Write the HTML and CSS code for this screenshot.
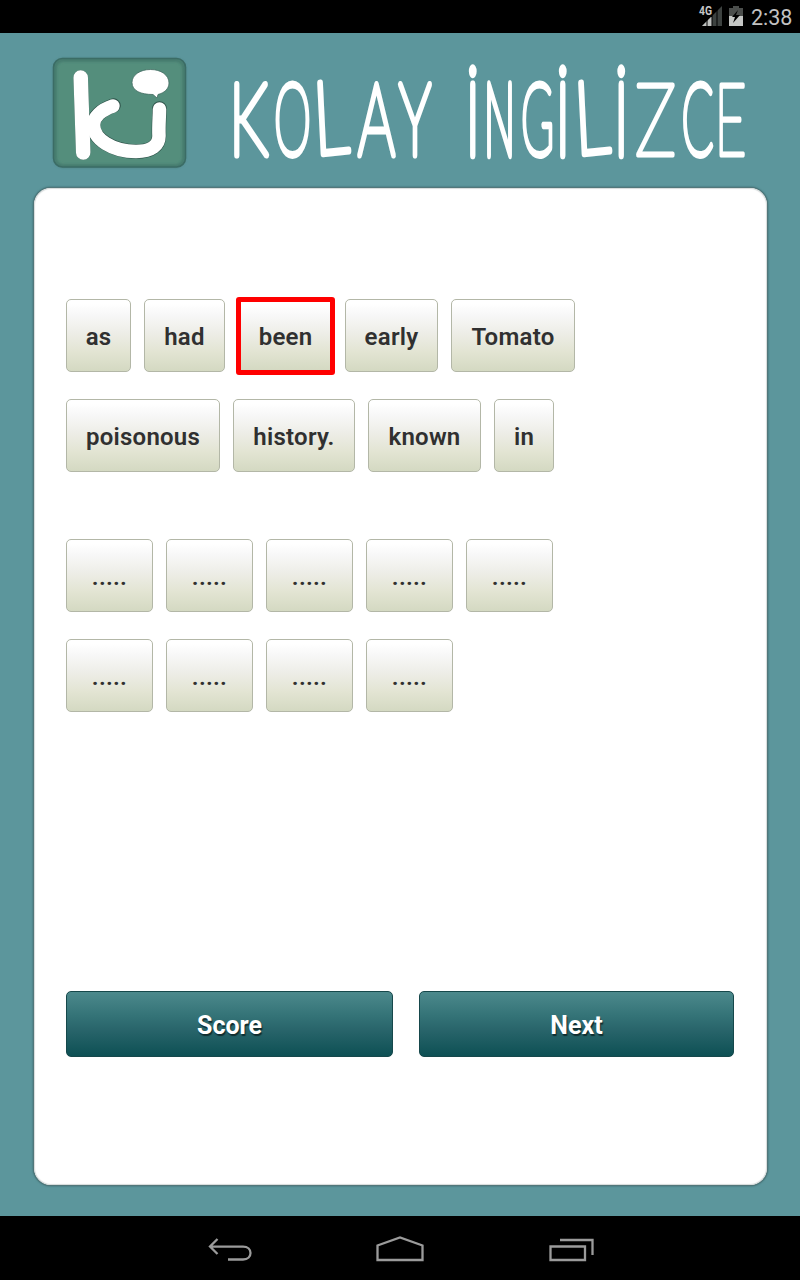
FILE: index.html
```html
<!DOCTYPE html>
<html lang="en">
<head>
<meta charset="utf-8">
<title>Kolay İngilizce</title>
<link rel="stylesheet" href="styles.css">
</head>
<body>
<div class="screen">
  <header class="status">
    <svg class="status-icons" width="48" height="33" viewBox="0 0 48 33">
      <path d="M25 6V26H5Z" fill="#3d4240"/>
      <path d="M15 16V26H5Z" fill="#bfc1bf"/>
      <path d="M10 5V26M15 5V26M20 5V26" stroke="#000" stroke-width="1"/>
      <path d="M2 3H15V17H2Z" fill="#000"/>
      <text class="network" x="2" y="15" textLength="13" lengthAdjust="spacingAndGlyphs">4G</text>
      <path d="M36 6H42V8H46V26H32V8H36Z" fill="#4b4e4c"/>
      <path d="M32 16H46V26H32Z" fill="#c5c7c5"/>
      <path d="M41 10L35 17H38L36 23L43 15H39Z" fill="#000"/>
    </svg>
    <span class="clock">2:38</span>
  </header>

  <main class="app">
    <div class="brand">
      <svg class="brand-art" width="800" height="150" viewBox="0 33 800 150">
        <defs>
          <filter id="edge" x="-10%" y="-10%" width="120%" height="120%"><feGaussianBlur stdDeviation="1.4"/></filter>
          <filter id="soft"><feGaussianBlur stdDeviation=".45"/></filter>
        </defs>
        <rect x="53.500" y="58.500" width="132" height="108.500" rx="9" fill="#548e7c"/>
        <rect x="55" y="60" width="129" height="106" rx="8" fill="none" stroke="#396b62" stroke-width="2" filter="url(#edge)"/>
        <rect x="53.500" y="58.500" width="132" height="108.500" rx="9" fill="none" stroke="#3b6c65" stroke-width="1.500"/>
        <g fill="none" stroke-linecap="round" stroke-linejoin="round">
          <g stroke="#2d5148" stroke-width="14.500">
            <path d="M80.700 77.500L83.200 152.500"/>
            <path d="M113.500 105.500C101 110 93 117 93 125C93 138 112 151.500 136 151.500C152 151.500 159 145 159 136C158.500 125 159.500 117 159.500 108.500"/>
          </g>
          <g stroke="#fff" stroke-width="13.500" filter="url(#soft)">
            <path d="M80.700 77.500L83.200 152.500" stroke-width="14.500"/>
            <path d="M113 106C101 110 93.500 117 93.500 125C93.500 139 112 151.500 136 151.500C152 151.500 159 145 159 136C158.500 125 159.500 117 159.500 109"/>
          </g>
        </g>
        <path d="M150.500 69.500C161 69.500 169 75 169 83C169 89 164 93 158 94.500L157 98L153 94.500C141 94.500 132 91 132 82.500C132 75 140 69.500 150.500 69.500Z" fill="#fff" stroke="#416b61" stroke-width=".8"/>
        <g class="wordmark">
          <text y="154.500"><tspan x="229" textLength="39" lengthAdjust="spacingAndGlyphs">K</tspan><tspan x="274" textLength="37" lengthAdjust="spacingAndGlyphs">O</tspan><tspan x="315" rotate="-4" textLength="35" lengthAdjust="spacingAndGlyphs">L</tspan><tspan x="358" textLength="37" lengthAdjust="spacingAndGlyphs">A</tspan><tspan x="399" textLength="32" lengthAdjust="spacingAndGlyphs">Y</tspan></text>
          <text y="154.500"><tspan class="heavy" x="466" textLength="13.500" lengthAdjust="spacingAndGlyphs">İ</tspan><tspan class="heavy" x="484" textLength="31" lengthAdjust="spacingAndGlyphs">N</tspan><tspan x="521" textLength="33" lengthAdjust="spacingAndGlyphs">G</tspan><tspan class="heavy" x="556" textLength="13.500" lengthAdjust="spacingAndGlyphs">İ</tspan><tspan x="576" rotate="-4" textLength="35" lengthAdjust="spacingAndGlyphs">L</tspan><tspan class="heavy" x="614.500" textLength="13.500" lengthAdjust="spacingAndGlyphs">İ</tspan><tspan class="light" x="635" textLength="41" lengthAdjust="spacingAndGlyphs">Z</tspan><tspan x="681.500" textLength="32" lengthAdjust="spacingAndGlyphs">C</tspan><tspan class="light" x="714.500" textLength="32" lengthAdjust="spacingAndGlyphs">E</tspan></text>
        </g>
      </svg>
    </div>

    <section class="card">
      <div class="words">
        <div class="row">
          <button class="tile" style="width:65px">as</button>
          <button class="tile" style="width:81px">had</button>
          <button class="tile selected" style="width:99px">been</button>
          <button class="tile" style="width:93px">early</button>
          <button class="tile" style="width:124px">Tomato</button>
        </div>
        <div class="row">
          <button class="tile" style="width:154px">poisonous</button>
          <button class="tile" style="width:122px">history.</button>
          <button class="tile" style="width:113px">known</button>
          <button class="tile" style="width:60px">in</button>
        </div>
      </div>
      <div class="words answer">
        <div class="row">
          <button class="tile slot">.....</button>
          <button class="tile slot">.....</button>
          <button class="tile slot">.....</button>
          <button class="tile slot">.....</button>
          <button class="tile slot">.....</button>
        </div>
        <div class="row">
          <button class="tile slot">.....</button>
          <button class="tile slot">.....</button>
          <button class="tile slot">.....</button>
          <button class="tile slot">.....</button>
        </div>
      </div>
      <div class="actions">
        <button class="action">Score</button>
        <button class="action">Next</button>
      </div>
    </section>
  </main>

  <nav class="navbar">
    <svg width="800" height="64" viewBox="0 1216 800 64" fill="none" stroke="#9b9b9b" stroke-width="2.300">
      <path d="M217.500 1239L210 1246.500L217.500 1254M210 1246.700H243C253 1246.700 253 1259.500 243 1259.500H228"/>
      <path d="M377.500 1260V1245.500L400 1237.500L422.500 1245.500V1260Z"/>
      <path d="M550.500 1246.500H585V1260H550.500ZM560 1240H592.500V1255"/>
    </svg>
  </nav>
</div>
</body>
</html>
```

FILE: styles.css
```css
* { box-sizing: border-box; }
body { margin: 0; font-family: Roboto, "Liberation Sans", sans-serif; }
button { font-family: inherit; margin: 0; padding: 0; }
svg { display: block; }

.screen { width: 800px; height: 1280px; display: flex; flex-direction: column; overflow: hidden; }
.status { height: 33px; background: #000; display: flex; justify-content: flex-end; align-items: center; gap: 6px; padding-right: 8px; }
.network { font: 700 12px Roboto, sans-serif; fill: #c6c6c6; }
.clock { width: 41px; color: #c2c2c2; font-size: 21.5px; line-height: 33px; padding-top: 2px; white-space: nowrap; }

.app { flex: 1; background: #5c969c; }
.brand { height: 155px; }
.wordmark text { font-family: Lato, sans-serif; font-weight: 100; font-size: 101px; fill: #fff; stroke: #fff; stroke-width: 7px; stroke-linejoin: round; }
.wordmark .heavy { stroke-width: 8.5px; }
.wordmark .light { stroke-width: 5px; }

.card { width: 733px; height: 997px; margin-left: 34px; padding: 111px 33px 0 32px; background: #fff; border-radius: 17px; box-shadow: 0 0 0 1px #52777a, 0 0 2px 1px #355e62, inset 0 0 1px 1px #d5dada; }
.words { display: flex; flex-direction: column; gap: 27px; }
.answer { margin-top: 67px; }
.row { display: flex; align-items: center; gap: 13px; height: 73px; }
.tile { height: 73px; flex: none; border: 1px solid #b3b7a7; border-radius: 5px; background: linear-gradient(#fff 5%, #f8f8f8 20%, #eeeee8 45%, #e2e4d2 74%, #d4d9c2); color: #303030; font-size: 24px; font-weight: 600; letter-spacing: .25px; padding-top: 3px; }
.selected { height: 78px; margin: 0 -3px 0 -2px; border: 5px solid #f00; border-radius: 3px; padding-top: 3px; }
.slot { width: 87px; }
.actions { display: flex; gap: 26px; margin-top: 279px; }
.action { width: 327px; height: 66px; border: 1px solid #16484b; border-radius: 5px; background: linear-gradient(#4c898c, #347377 37%, #28646a 60%, #0d5054); color: #fff; font-size: 25px; font-weight: 700; text-shadow: 1px 2px 1px #102d30; padding-top: 3px; }
.action + .action { width: 315px; }

.navbar { height: 64px; background: #000; }
```
